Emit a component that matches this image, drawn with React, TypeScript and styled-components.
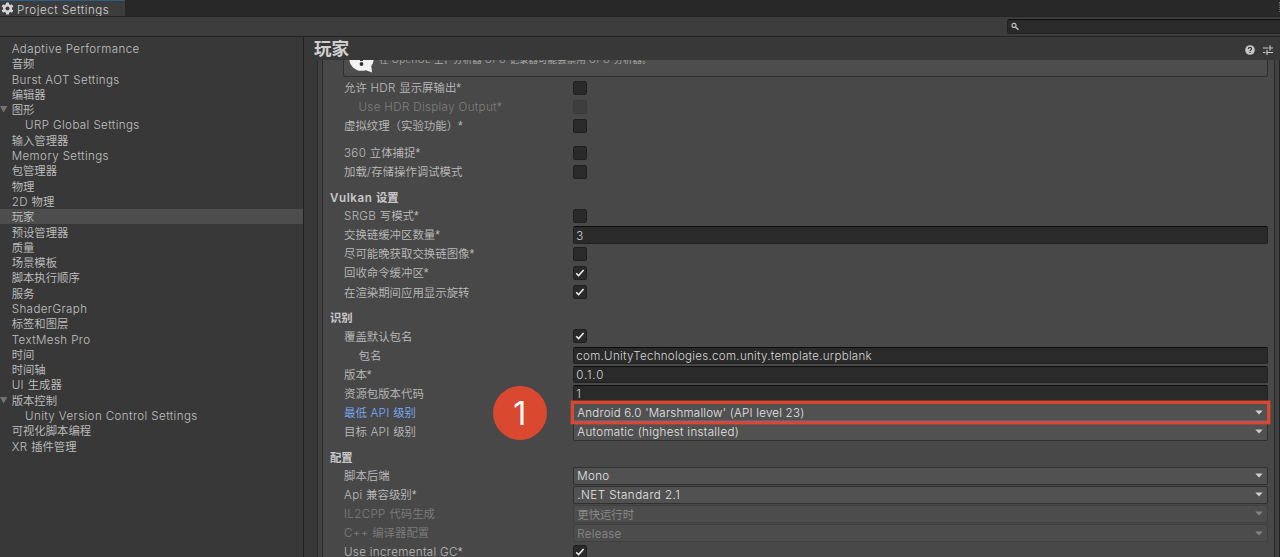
import React from 'react';
import styled, { createGlobalStyle, css } from 'styled-components';

const GlobalStyle = createGlobalStyle`
  * { box-sizing: border-box; }
  html, body { margin: 0; background: #383838; }
  body {
    font-family: "Noto Sans CJK SC", sans-serif;
    font-size: 11.35px;
    color: #c0c0c0;
    overflow: hidden;
    font-weight: 350;
  }
`;

const Window = styled.div`
  display: flex;
  flex-direction: column;
  width: 1280px;
  height: 557px;
  overflow: hidden;
  background: #383838;
`;

const Latin = styled.span<{ $ls?: number }>`
  font-family: Inter, sans-serif;
  font-size: 1.02em;
  font-weight: 340;
  letter-spacing: ${(p) => p.$ls ?? 0.41}px;
`;
const Star = styled.span`
  font-family: "Liberation Sans", sans-serif;
  font-size: 1.05em;
  font-weight: 400;
`;

const Mixed = ({ text, ls }: { text: string; ls?: number }) => (
  <span>
    {(text.match(/\*|[\x20-\x29\x2b-\x7e]+|[^\x20-\x7e]+/g) ?? []).map((run, i) => {
      if (run === '*') return <Star key={i}>{run}</Star>;
      return /[\x20-\x7e]/.test(run) ? <Latin key={i} $ls={ls}>{run}</Latin> : run;
    })}
  </span>
);

const TabStrip = styled.div`
  display: flex;
  flex: none;
  height: 17px;
  background: #282828;
  border-bottom: 1px solid #232323;
  justify-content: space-between;
  overflow: hidden;
`;
const Tab = styled.div`
  display: flex;
  align-items: center;
  gap: 3px;
  width: 125px;
  height: 17px;
  padding: 0 0 1px 1px;
  border-top: 1px solid #2c5d87;
  background: #3c3c3c;
  color: #d4d4d4;
  white-space: nowrap;
`;
const MoreDots = styled.div`
  width: 1px;
  height: 10px;
  margin-top: 2px;
  border-left: 1px dotted #666;
`;
const Toolbar = styled.div`
  display: flex;
  flex: none;
  justify-content: flex-end;
  height: 20px;
  padding-top: 2px;
  background: #3c3c3c;
  border-bottom: 1px solid #232323;
`;
const Search = styled.div`
  display: flex;
  align-items: center;
  width: 273px;
  height: 15px;
  padding-left: 3px;
  background: #2a2a2a;
  border: 1px solid #212121;
  border-top-color: #0d0d0d;
  border-right: 0;
  border-radius: 3px 0 0 3px;
`;
const Body = styled.div`
  display: flex;
  flex: 1;
  min-height: 0;
`;
const Sidebar = styled.nav`
  flex: none;
  width: 304px;
  padding-top: 3.3px;
  border-right: 1px solid #212121;
`;
const NavItem = styled.div<{ $selected?: boolean; $child?: boolean }>`
  display: flex;
  align-items: center;
  height: 15.31px;
  padding-left: ${(p) => (p.$child ? 25 : 0)}px;
  background: ${(p) => (p.$selected ? '#4d4d4d' : 'transparent')};
  white-space: nowrap;
`;
const Fold = styled.span`
  display: flex;
  width: 11.7px;
  flex: none;
`;
const Main = styled.main`
  display: flex;
  flex: 1;
  flex-direction: column;
  min-width: 0;
`;
const MainHeader = styled.header`
  display: flex;
  flex: none;
  align-items: center;
  justify-content: space-between;
  height: 23px;
  padding: 0 7.5px 0 10px;
`;
const Title = styled.h1`
  margin: -2px 0 0;
  font-size: 17.6px;
  line-height: 22px;
  font-weight: 700;
  color: #d0d0d0;
`;
const HeaderIcons = styled.div`
  display: flex;
  gap: 8px;
  padding-top: 3.5px;
`;
const Scroll = styled.div`
  display: flex;
  flex: 1;
  min-height: 0;
  overflow: hidden;
  padding: 0 0 0 13px;
  border-right: 1px solid #232323;
`;
const Outer = styled.div`
  flex: 1;
  height: 560px;
  padding: 0 4px;
  background: #414141;
  border-left: 1px solid #2b2b2b;
`;
const Panel = styled.section`
  height: 560px;
  padding: 0 6px 0 7px;
  background: #484848;
  border-left: 1px solid #2a2a2a;
  border-right: 1px solid #2a2a2a;
`;
const HelpBox = styled.div`
  display: flex;
  height: 17px;
  margin-left: 13px;
  margin-bottom: 1.4px;
  padding-left: 5px;
  background: #4d4d4d;
  border: 1px solid #303030;
  border-top: 0;
  border-radius: 0 0 3px 3px;
  overflow: hidden;
`;
const HelpText = styled.div`
  margin: -9px 0 0 5px;
  font-size: 9.55px;
  line-height: 16px;
  color: #b0b0b0;
  white-space: nowrap;
`;
const HelpIcon = styled.div`
  width: 25px;
  height: 26px;
  margin-top: -13px;
`;
const Row = styled.div<{ $indent?: boolean; $dim?: boolean; $active?: boolean }>`
  display: grid;
  grid-template-columns: 243.3px 1fr;
  align-items: center;
  height: 19.1px;
  line-height: 18px;
  white-space: nowrap;
  > :first-child {
    margin-top: -1px;
    padding-left: ${(p) => (p.$indent ? 28.5 : 14)}px;
    font-size: 11.42px;
    color: ${(p) => (p.$active ? '#7baefa' : p.$dim ? '#7e7e7e' : '#bcbcbc')};
  }
`;
const Gap = styled.div`
  height: 7.7px;
`;
const Section = styled.h2`
  height: 24.9px;
  margin: 0;
  padding-top: 6.3px;
  font-size: 11.35px;
  line-height: 18px;
  font-weight: 700;
  color: #c8c8c8;
  ${Latin} { font-weight: 600; letter-spacing: 0.6px; }
`;
const Check = styled.div<{ $dim?: boolean }>`
  display: flex;
  align-items: center;
  justify-content: center;
  width: 14px;
  height: 14px;
  border: 1px solid ${(p) => (p.$dim ? '#3a3a3a' : '#202020')};
  border-radius: 2px;
  background: ${(p) => (p.$dim ? '#3e3e3e' : '#2a2a2a')};
`;
const Control = styled.div`
  display: flex;
  align-items: center;
  height: 17.5px;
  border-radius: 2px;
`;
const Input = styled(Control)`
  padding-left: 2px;
  background: #2a2a2a;
  border: 1px solid #212121;
  border-top-color: #0d0d0d;
  color: #d6d6d6;
`;
const Select = styled(Control)<{ $dim?: boolean; $focus?: boolean }>`
  justify-content: space-between;
  padding: 0 4.5px 0 3px;
  border: 1px solid ${(p) => (p.$dim ? '#404040' : '#303030')};
  background: ${(p) => (p.$dim ? '#4c4c4c' : '#515151')};
  color: ${(p) => (p.$dim ? '#8e8e8e' : '#e6e6e6')};
  ${(p) => p.$focus && css`
    height: 17px;
    border: 0;
    border-bottom: 1px solid #46679a;
    border-radius: 0;
    box-shadow: 0 0 0 3.4px #d9482f;
    margin: 0 1px;
  `}
`;
const FocusWrap = styled.div`
  position: relative;
  z-index: 1;
`;
const Badge = styled.div`
  position: absolute;
  left: -80.5px;
  top: -18px;
  display: flex;
  align-items: center;
  justify-content: center;
  width: 54px;
  height: 54px;
  padding-top: 1px;
  border-radius: 50%;
  background: #d9482f;
  color: #fff;
  font: 400 32px Inter, sans-serif;
`;

const Caret = ({ dim }: { dim?: boolean }) => (
  <svg width="8" height="5" viewBox="0 0 8 5"><path d="M.3 .5h7.400L4 4.500z" fill={dim ? '#858585' : '#d0d0d0'} /></svg>
);
const Tick = () => (
  <svg width="10" height="10" viewBox="0 0 10 10"><path d="M1.2 5.2l2.4 2.4 5-5.6" fill="none" stroke="#eee" strokeWidth="1.5" /></svg>
);
const Gear = () => (
  <svg width="13" height="13" viewBox="-6.5 -6.5 13 13">
    <g fill="#d4d4d4">
      {[0, 60, 120].map((a) => <rect key={a} x="-1.5" y="-6" width="3" height="12" rx=".6" transform={`rotate(${a})`} />)}
    </g>
    <circle r="3.2" fill="none" stroke="#d4d4d4" strokeWidth="2.6" />
    <circle r="2" fill="#3c3c3c" />
  </svg>
);

type Item = [string, ('child' | 'fold')?];
const nav: Item[] = [
  ['Adaptive Performance'], ['音频'], ['Burst AOT Settings'], ['编辑器'], ['图形', 'fold'],
  ['URP Global Settings', 'child'], ['输入管理器'], ['Memory Settings'], ['包管理器'], ['物理'],
  ['2D 物理'], ['玩家'], ['预设管理器'], ['质量'], ['场景模板'], ['脚本执行顺序'], ['服务'],
  ['ShaderGraph'], ['标签和图层'], ['TextMesh Pro'], ['时间'], ['时间轴'], ['UI 生成器'],
  ['版本控制', 'fold'], ['Unity Version Control Settings', 'child'], ['可视化脚本编程'], ['XR 插件管理'],
];

type FieldProps = {
  label: string; indent?: boolean; dim?: boolean; active?: boolean; children: React.ReactNode;
};
const Field = ({ label, indent, dim, active, children }: FieldProps) => (
  <Row $indent={indent} $dim={dim} $active={active}>
    <div><Mixed text={label} ls={0.32} /></div>
    {children}
  </Row>
);
type ValueProps = Omit<FieldProps, 'children'> & { value: string; ls?: number };
const Toggle = ({ on, ...f }: Omit<FieldProps, 'children'> & { on?: boolean }) => (
  <Field {...f}><Check $dim={f.dim}>{on && <Tick />}</Check></Field>
);
const TextField = ({ value, ls, ...f }: ValueProps) => (
  <Field {...f}><Input><Mixed text={value} ls={ls} /></Input></Field>
);
const Dropdown = ({ value, ls, ...f }: ValueProps) => (
  <Field {...f}><Select $dim={f.dim}><Mixed text={value} ls={ls} /><Caret dim={f.dim} /></Select></Field>
);

export default function App() {
  return (
    <Window>
      <GlobalStyle />
      <TabStrip>
        <Tab><Gear /><Mixed text="Project Settings" ls={0.54} /></Tab>
        <MoreDots />
      </TabStrip>
      <Toolbar>
        <Search>
          <svg width="9" height="9" viewBox="0 0 9 9" fill="none" stroke="#c4c4c4"><circle cx="3" cy="3.400" r="2" strokeWidth="1.100" /><path d="M4.500 5l3 2.800" strokeWidth="1.400" /></svg>
        </Search>
      </Toolbar>
      <Body>
        <Sidebar>
          {nav.map(([name, kind]) => (
            <NavItem key={name} $selected={name === '玩家'} $child={kind === 'child'}>
              {kind !== 'child' && (
                <Fold>{kind === 'fold' && <svg width="8" height="8" viewBox="0 0 8 8"><path d="M0 1h7.400L3.500 7.500z" fill="#737373" /></svg>}</Fold>
              )}
              <Mixed text={name} />
            </NavItem>
          ))}
        </Sidebar>
        <Main>
          <MainHeader>
            <Title>玩家</Title>
            <HeaderIcons>
              <svg width="10" height="10" viewBox="0 0 10 10"><circle cx="5" cy="5" r="4.8" fill="#c8c8c8" /><path d="M3.4 4c0-2.1 3.2-2 3.2-.2C6.600 5 5 4.900 5 6.200M5 7v1.100" fill="none" stroke="#383838" strokeWidth="1.200" /></svg>
              <svg width="10" height="10" viewBox="0 0 10 10" stroke="#c8c8c8" strokeWidth="1.200"><path d="M0 3h5.500M7 3h3M7 .5v5M0 7.500h2.500M4 7.500H10M4 5v5" /></svg>
            </HeaderIcons>
          </MainHeader>
          <Scroll>
            <Outer>
              <Panel>
                <HelpBox>
                  <HelpIcon>
                    <svg width="26" height="26" viewBox="0 0 26 26"><circle cx="12.500" cy="11.500" r="12.300" fill="#f2f2f2" /><path d="M15 22.500l8 3-1-9z" fill="#f2f2f2" /><circle cx="12.500" cy="17" r="1.900" fill="#333" /><path d="M12.500 5v9" stroke="#333" strokeWidth="3" /></svg>
                  </HelpIcon>
                  <HelpText><Mixed text="在 OpenGL 上，分析器 GPU 记录器可能会禁用 GPU 分析器。" ls={0.33} /></HelpText>
                </HelpBox>
                <Toggle label="允许 HDR 显示屏输出*" />
                <Toggle label="Use HDR Display Output*" indent dim />
                <Toggle label="虚拟纹理（实验功能）*" />
                <Gap />
                <Toggle label="360 立体捕捉*" />
                <Toggle label="加载/存储操作调试模式" />
                <Section><Mixed text="Vulkan 设置" /></Section>
                <Toggle label="SRGB 写模式*" />
                <TextField label="交换链缓冲区数量*" value="3" />
                <Toggle label="尽可能晚获取交换链图像*" />
                <Toggle label="回收命令缓冲区*" on />
                <Toggle label="在渲染期间应用显示旋转" on />
                <Section>识别</Section>
                <Toggle label="覆盖默认包名" on />
                <TextField label="包名" indent value="com.UnityTechnologies.com.unity.template.urpblank" ls={0.28} />
                <TextField label="版本*" value="0.1.0" ls={0.8} />
                <TextField label="资源包版本代码" value="1" />
                <Field label="最低 API 级别" active>
                  <FocusWrap>
                    <Select $focus><Mixed text="Android 6.0 'Marshmallow' (API level 23)" ls={0.22} /><Caret /></Select>
                    <Badge>1</Badge>
                  </FocusWrap>
                </Field>
                <Dropdown label="目标 API 级别" value="Automatic (highest installed)" ls={0.33} />
                <Section>配置</Section>
                <Dropdown label="脚本后端" value="Mono" ls={0.3} />
                <Dropdown label="Api 兼容级别*" value=".NET Standard 2.1" ls={0.48} />
                <Dropdown label="IL2CPP 代码生成" dim value="更快运行时" />
                <Dropdown label="C++ 编译器配置" dim value="Release" ls={0.25} />
                <Toggle label="Use incremental GC*" on />
              </Panel>
            </Outer>
          </Scroll>
        </Main>
      </Body>
    </Window>
  );
}
